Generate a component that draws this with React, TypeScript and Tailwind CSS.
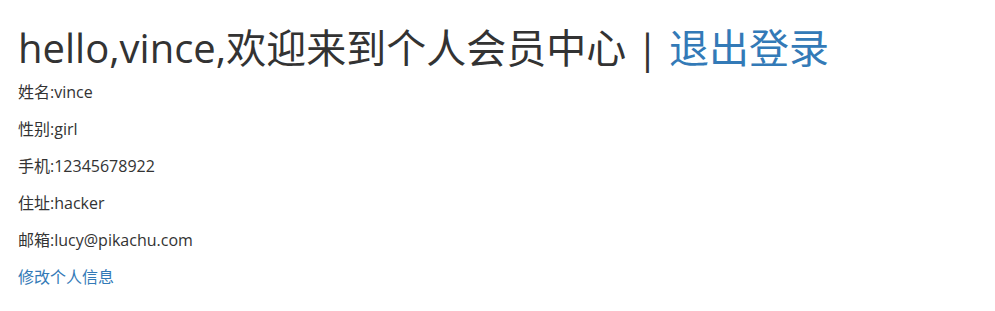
export default function App() {
  const rows = [
    { label: '姓名', value: 'vince' },
    { label: '性别', value: 'girl' },
    { label: '手机', value: '12345678922' },
    { label: '住址', value: 'hacker' },
    { label: '邮箱', value: 'lucy@pikachu.com' },
  ]

  return (
    <div
      className="min-h-[311px] bg-white px-[18px] pt-[22px] text-[#333333]"
      style={{ fontFamily: '"Open Sans", "Noto Sans CJK SC", sans-serif' }}
    >
      <h1 className="text-[40px] leading-[52px] font-normal">
        hello,vince,欢迎来到个人会员中心 | <a href="#" className="text-[#337ab7]">退出登录</a>
      </h1>
      <div className="flex flex-col text-[16px]">
        {rows.map((row) => (
          <p key={row.label} className="h-[37px] leading-[37px]">
            {row.label}:{row.value}
          </p>
        ))}
        <a href="#" className="h-[37px] leading-[37px] text-[#337ab7]">
          修改个人信息
        </a>
      </div>
    </div>
  )
}
